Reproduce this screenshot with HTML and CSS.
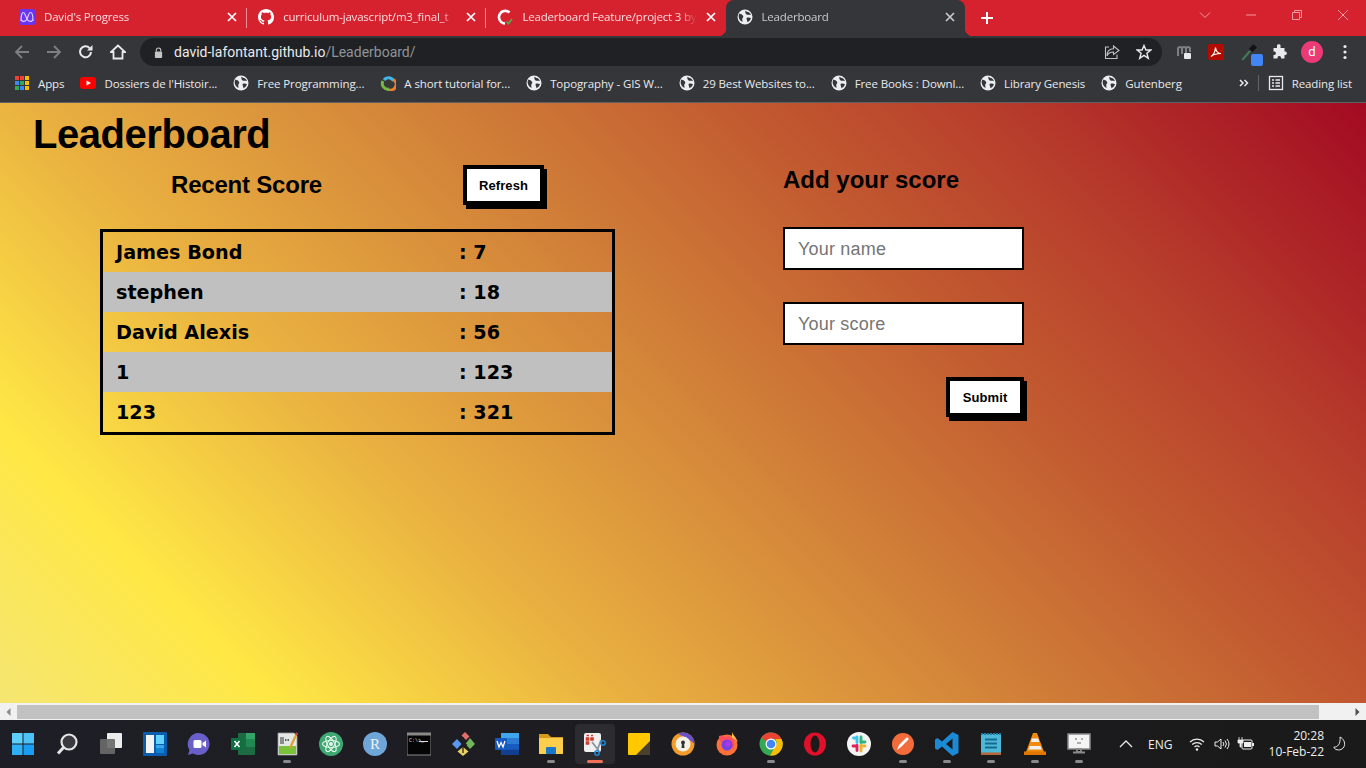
FILE: index.html
```html
<!DOCTYPE html>
<html lang="en">
<head>
    <meta charset="UTF-8">
    <title>Leaderboard</title>
    <link rel="stylesheet" href="styles.css">
</head>
<body>

<svg class="sprite" xmlns="http://www.w3.org/2000/svg">
    <symbol id="globe" viewBox="0 0 16 16">
        <circle cx="8" cy="8" r="7.500" fill="#eceef0"/>
        <path d="M2.500 4.500C4 5 5 5.500 5.800 6.500 6.500 7.500 6.500 8.500 5.500 9 5 10 5.500 11.500 5.500 13 4 12.500 2 10.500 1.700 8 1.600 6.500 1.800 5.500 2.500 4.500ZM8.500 1.800C9.500 2.500 10.500 3 11.800 3.200 12.800 4 13.500 5 14 6 13 5.800 12 5.800 10.800 5.800 9.500 5.800 9 5 8.500 4 8.200 3.200 8.200 2.500 8.500 1.800ZM10.500 8.500C12 8.300 13.200 8.700 14 9.200 13.300 11 12 12.500 10.500 13.300 10.200 12 10 11 9.600 10.200 9.400 9.300 9.700 8.700 10.500 8.500Z" fill="#35363a"/>
    </symbol>
    <symbol id="close" viewBox="0 0 10 10">
        <path d="M1 1 9 9M9 1 1 9" stroke="currentColor" stroke-width="1.700" fill="none"/>
    </symbol>
</svg>

<div class="tabbar">
    <div class="tab">
        <svg class="favicon" viewBox="0 0 16 16"><rect width="16" height="16" rx="2" fill="#6a35f0"/><path d="M2 12C2 6 3 3.500 4.500 3.500S6 6 8 10C10 6 9.500 3.500 11.500 3.500S14 6 14 12M2.500 10.500C2.500 13 6.500 13 8 10 9.500 13 13.500 13 13.500 10.500" stroke="#d9ccff" stroke-width="1.200" fill="none"/></svg>
        <span class="tab-title">David's Progress</span>
        <svg class="tab-close" viewBox="0 0 10 10"><use href="#close"/></svg>
    </div>
    <div class="tab">
        <svg class="favicon" viewBox="0 0 16 16"><path fill="#fff" d="M8 0C3.580 0 0 3.580 0 8c0 3.540 2.290 6.530 5.470 7.590.4.070.55-.17.55-.38 0-.19-.01-.82-.01-1.490-2.010.370-2.530-.49-2.690-.94-.09-.23-.48-.94-.82-1.130-.28-.15-.68-.52-.01-.53.630-.01 1.080.58 1.230.82.720 1.210 1.870.870 2.330.660.070-.52.280-.87.510-1.070-1.780-.2-3.640-.89-3.640-3.950 0-.87.310-1.590.820-2.150-.08-.2-.36-1.020.08-2.120 0 0 .67-.21 2.200.820.640-.18 1.320-.27 2-.27s1.360.090 2 .27c1.530-1.040 2.200-.82 2.200-.82.440 1.100.16 1.920.08 2.120.510.560.820 1.270.820 2.150 0 3.070-1.870 3.750-3.650 3.950.290.250.540.730.540 1.480 0 1.070-.01 1.930-.01 2.200 0 .21.150.46.550.380A8.010 8.010 0 0 0 16 8c0-4.420-3.580-8-8-8Z"/></svg>
        <span class="tab-title">curriculum-javascript/m3_final_t</span>
        <svg class="tab-close" viewBox="0 0 10 10"><use href="#close"/></svg>
    </div>
    <div class="tab">
        <svg class="favicon" viewBox="0 0 16 16"><path d="M12.500 3.500A6.300 6.300 0 1 0 8 14.500" stroke="#fff" stroke-width="2.600" fill="none"/><path d="M9.500 12.500 11.500 14.500 15 10" stroke="#3fb950" stroke-width="1.500" fill="none"/></svg>
        <span class="tab-title">Leaderboard Feature/project 3 by</span>
        <svg class="tab-close" viewBox="0 0 10 10"><use href="#close"/></svg>
    </div>
    <div class="tab tab-active">
        <svg class="favicon"><use href="#globe"/></svg>
        <span class="tab-title">Leaderboard</span>
        <svg class="tab-close" viewBox="0 0 10 10"><use href="#close"/></svg>
    </div>
    <svg class="new-tab" viewBox="0 0 14 14"><path d="M7 1V13M1 7H13" stroke="#fff" stroke-width="2" fill="none"/></svg>
    <div class="window-controls">
        <svg viewBox="0 0 12 12"><path d="M1 3.500 6 8.500 11 3.500" fill="none" stroke="#ee9aa0"/></svg>
        <svg viewBox="0 0 12 12"><path d="M1 6H11" fill="none" stroke="#ee9aa0"/></svg>
        <svg viewBox="0 0 12 12"><path d="M1.500 3.500H8.500V10.500H1.500ZM3.500 3.500V1.500H10.500V8.500H8.500" fill="none" stroke="#ee9aa0"/></svg>
        <svg viewBox="0 0 12 12"><path d="M1 1 11 11M11 1 1 11" fill="none" stroke="#ee9aa0"/></svg>
    </div>
</div>

<div class="toolbar">
    <svg class="tool" viewBox="0 0 16 16"><path d="M15 8H2M8 2 2 8 8 14" fill="none" stroke="#7d7f83" stroke-width="1.800"/></svg>
    <svg class="tool" viewBox="0 0 16 16"><path d="M1 8H14M8 2 14 8 8 14" fill="none" stroke="#7d7f83" stroke-width="1.800"/></svg>
    <svg class="tool" viewBox="0 0 16 16"><path d="M13 8A5.500 5.500 0 1 1 11.500 4" fill="none" stroke="#e8eaed" stroke-width="2"/><path d="M14.500 1V6.500H9Z" fill="#e8eaed"/></svg>
    <svg class="tool" viewBox="0 0 16 16"><path d="M8 1.500 1 8H3.500V14.500H12.500V8H15Z" fill="none" stroke="#e8eaed" stroke-width="1.800"/></svg>
    <div class="omnibox">
        <svg class="lock" viewBox="0 0 10 12"><path d="M2.500 5V3.500A2.500 2.500 0 0 1 7.500 3.500V5" fill="none" stroke="#c4c7c5" stroke-width="1.200"/><rect x="1" y="5" width="8" height="7" rx="1" fill="#c4c7c5"/></svg>
        <span class="url">david-lafontant.github.io<span class="url-path">/Leaderboard/</span></span>
        <svg class="omni-icon" viewBox="0 0 16 16"><path d="M9.500 2 15 6.500 9.500 10.500V8C6 8 4 9.500 3 12 3 8 5 5 9.500 4.800ZM5 3H1.500V14.500H13V10.500" fill="none" stroke="#bdc1c6" stroke-width="1.100"/></svg>
        <svg class="omni-icon" viewBox="0 0 16 16"><path d="M8 1.500 9.900 6H14.800L10.900 9.200 12.300 14.300 8 11.400 3.700 14.300 5.100 9.200 1.200 6H6.100Z" fill="none" stroke="#e8eaed" stroke-width="1.400"/></svg>
    </div>
    <div class="extensions">
        <svg class="ext-wide" viewBox="0 0 16 16"><path d="M2 12V5A2 2 0 0 1 6 5V10M6 5A2 2 0 0 1 10 5V9M10 5A2 2 0 0 1 14 5V8" fill="none" stroke="#7d7f83" stroke-width="2"/><rect x="8" y="9" width="7" height="6" rx="1" fill="#e8eaed"/></svg>
        <svg class="ext-pdf" viewBox="0 0 16 16"><rect width="16" height="16" rx="2" fill="#b30b00"/><path d="M3 12.500C5 11.500 7 8 7.500 3.500 8 7.500 10 9.500 13 9.500 10 9.500 6 10 3 12.500Z" fill="none" stroke="#fff" stroke-width="1.200"/></svg>
        <span class="ext-dropper">
            <svg viewBox="0 0 16 16"><path d="M2 15 9 7" stroke="#3d7d5a" stroke-width="2"/><path d="M8 5 12 1 15 4 11 8Z" fill="#111"/></svg>
            <span class="ext-badge"></span>
        </span>
        <svg class="ext-puzzle" viewBox="0 0 16 16"><path fill="#e8eaed" d="M6 1.500A1.700 1.700 0 0 1 9.500 2.500V4H13.500V7.500H14.500A1.800 1.800 0 0 1 14.500 11H13.500V14.500H10V13.500A1.800 1.800 0 0 0 6.500 13.500V14.500H2.500V11H3.500A1.800 1.800 0 0 0 3.500 7.500H2.500V4H6Z"/></svg>
        <span class="avatar">d</span>
        <svg class="kebab" viewBox="0 0 4 16"><circle cx="2" cy="2.500" r="1.600"/><circle cx="2" cy="8" r="1.600"/><circle cx="2" cy="13.500" r="1.600"/></svg>
    </div>
</div>

<div class="bookmarks">
    <div class="bookmark">
        <svg class="favicon" viewBox="0 0 16 16">
            <rect x="1" y="1" width="4" height="4" fill="#ea4335"/><rect x="6" y="1" width="4" height="4" fill="#ea4335"/><rect x="11" y="1" width="4" height="4" fill="#fbbc04"/>
            <rect x="1" y="6" width="4" height="4" fill="#4285f4"/><rect x="6" y="6" width="4" height="4" fill="#34a853"/><rect x="11" y="6" width="4" height="4" fill="#fbbc04"/>
            <rect x="1" y="11" width="4" height="4" fill="#34a853"/><rect x="6" y="11" width="4" height="4" fill="#4285f4"/><rect x="11" y="11" width="4" height="4" fill="#fbbc04"/>
        </svg>
        <span>Apps</span>
    </div>
    <div class="bookmark">
        <svg class="favicon" viewBox="0 0 16 16"><rect y="2" width="16" height="12" rx="3" fill="#f00"/><path d="M6.500 5.500V10.500L11 8Z" fill="#fff"/></svg>
        <span>Dossiers de l'Histoir...</span>
    </div>
    <div class="bookmark"><svg class="favicon"><use href="#globe"/></svg><span>Free Programming...</span></div>
    <div class="bookmark">
        <svg class="favicon" viewBox="0 0 16 16"><path d="M4 5A5.500 5.500 0 0 1 13.500 6" fill="none" stroke="#41b6e6" stroke-width="3"/><path d="M13 4.500A5.500 5.500 0 0 1 8 14.500" fill="none" stroke="#ef7d31" stroke-width="3"/><path d="M9 14A5.500 5.500 0 0 1 3 6" fill="none" stroke="#74b843" stroke-width="3"/></svg>
        <span>A short tutorial for...</span>
    </div>
    <div class="bookmark"><svg class="favicon"><use href="#globe"/></svg><span>Topography - GIS W...</span></div>
    <div class="bookmark"><svg class="favicon"><use href="#globe"/></svg><span>29 Best Websites to...</span></div>
    <div class="bookmark"><svg class="favicon"><use href="#globe"/></svg><span>Free Books : Downl...</span></div>
    <div class="bookmark"><svg class="favicon"><use href="#globe"/></svg><span>Library Genesis</span></div>
    <div class="bookmark"><svg class="favicon"><use href="#globe"/></svg><span>Gutenberg</span></div>
    <div class="bookmarks-end">
        <svg class="more" viewBox="0 0 10 8"><path d="M1 1 4 4 1 7M5.500 1 8.500 4 5.500 7" fill="none" stroke="#e8eaed" stroke-width="1.500"/></svg>
        <span class="divider"></span>
        <svg class="favicon" viewBox="0 0 16 16"><rect x="1.500" y="1.500" width="13" height="13" fill="none" stroke="#e8eaed" stroke-width="1.300"/><path d="M4 5H6M7.500 5H12M4 8H6M7.500 8H12M4 11H6M7.500 11H12" stroke="#e8eaed" stroke-width="1.300"/></svg>
        <span>Reading list</span>
    </div>
</div>

<main class="page">
    <h1>Leaderboard</h1>
    <div class="board">
        <section class="scores">
            <div class="scores-head">
                <h2 class="recent-title">Recent Score</h2>
                <button class="btn">Refresh</button>
            </div>
            <table class="score-table">
                <tr><td>James Bond</td><td>: 7</td></tr>
                <tr><td>stephen</td><td>: 18</td></tr>
                <tr><td>David Alexis</td><td>: 56</td></tr>
                <tr><td>1</td><td>: 123</td></tr>
                <tr><td>123</td><td>: 321</td></tr>
            </table>
        </section>
        <form class="add-score">
            <h2>Add your score</h2>
            <input type="text" placeholder="Your name">
            <input type="text" placeholder="Your score">
            <button type="button" class="btn btn-submit">Submit</button>
        </form>
    </div>
</main>

<div class="scrollbar">
    <svg class="arrow" viewBox="0 0 6 8"><path d="M5 0V8L1 4Z" fill="#8a8a8a"/></svg>
    <div class="scroll-thumb"></div>
    <svg class="arrow" viewBox="0 0 6 8"><path d="M1 0V8L5 4Z" fill="#505050"/></svg>
</div>

<footer class="taskbar">
    <div class="task-apps">
        <div class="app"><svg viewBox="0 0 24 24"><rect x="1" y="1" width="10.500" height="10.500" fill="#5cd0fb"/><rect x="12.500" y="1" width="10.500" height="10.500" fill="#4cc2f8"/><rect x="1" y="12.500" width="10.500" height="10.500" fill="#2fb0f5"/><rect x="12.500" y="12.500" width="10.500" height="10.500" fill="#1a9df0"/></svg></div>
        <div class="app"><svg viewBox="0 0 24 24"><circle cx="14" cy="10" r="7.500" fill="#3a3a40" stroke="#e6e6e6" stroke-width="2.200"/><path d="M8.500 15.500 3 21.500" stroke="#e6e6e6" stroke-width="3"/></svg></div>
        <div class="app"><svg viewBox="0 0 24 24"><rect x="8" y="1" width="15" height="15" rx="1" fill="#ececec"/><rect x="1" y="7" width="15" height="15" rx="1" fill="#6a6a6a" fill-opacity=".92"/></svg></div>
        <div class="app"><svg viewBox="0 0 24 24"><rect width="24" height="24" rx="1" x="0" y="0" fill="#0b5cad"/><rect x="3" y="3" width="8" height="18" fill="#f2f2f2"/><rect x="13" y="3" width="8" height="9" fill="#63d3fb"/><rect x="13" y="13" width="8" height="3.500" fill="#2fa8ee"/><rect x="13" y="17" width="8" height="4" fill="#0e82d8"/></svg></div>
        <div class="app"><svg viewBox="0 0 24 24"><path d="M12 1A11 11 0 1 1 6 21.500L1 23 2.500 18A11 11 0 0 1 12 1Z" fill="#6a5fc9"/><rect x="6.500" y="8" width="8" height="8" rx="1.500" fill="#fff"/><path d="M15.500 11 19 8.500V15.500L15.500 13Z" fill="#fff"/></svg></div>
        <div class="app"><svg viewBox="0 0 24 24"><rect x="7" y="1" width="17" height="22" rx="1" fill="#1d6b42"/><rect x="15" y="1" width="9" height="6" fill="#33a36a"/><rect x="15" y="7" width="9" height="8" fill="#1f8a54"/><rect x="0" y="6" width="12" height="12" rx="1" fill="#107040"/><path d="M3.500 9 8.500 15M8.500 9 3.500 15" stroke="#fff" stroke-width="1.600"/></svg></div>
        <div class="app app-open"><svg viewBox="0 0 24 24"><path d="M3 1H19L22 4V23H3Z" fill="#e4e8e4" stroke="#9a9a9a" stroke-width=".8"/><path d="M4 14H21V22H4Z" fill="#79c23a"/><path d="M6 5V12M8 5V12" stroke="#333" stroke-width="1"/><path d="M10 8H14" stroke="#333" stroke-width="1.500" stroke-dasharray="1.500 1"/><path d="M22 1 15 16" stroke="#e0a030" stroke-width="2.200"/><path d="M22 1 21 3" stroke="#c23a3a" stroke-width="2.200"/></svg></div>
        <div class="app"><svg viewBox="0 0 24 24"><circle cx="12" cy="12" r="12" fill="#3ea873"/><circle cx="12" cy="12" r="2" fill="#e4f5ea"/><g fill="none" stroke="#e4f5ea" stroke-width="1.100"><ellipse cx="12" cy="12" rx="8.500" ry="3.500"/><ellipse cx="12" cy="12" rx="8.500" ry="3.500" transform="rotate(60 12 12)"/><ellipse cx="12" cy="12" rx="8.500" ry="3.500" transform="rotate(120 12 12)"/></g></svg></div>
        <div class="app"><svg viewBox="0 0 24 24"><circle cx="12" cy="12" r="12" fill="#6fa6d8"/><text x="12" y="17" text-anchor="middle" class="r-letter">R</text></svg></div>
        <div class="app"><svg viewBox="0 0 24 24"><rect x="0" y="1" width="24" height="22" fill="#050505" stroke="#8a8a8a"/><rect x="0" y="1" width="24" height="2.500" fill="#8a8a8a"/><text x="2" y="10" class="term-text">C:\&gt;_</text><path d="M12 9.500H21" stroke="#ddd"/></svg></div>
        <div class="app"><svg viewBox="0 0 24 24"><path d="M14 0 18.500 4.500 15 8 10.500 3.500Z" fill="#e26d6d"/><path d="M19 6 24 12 19 17 14.500 12Z" fill="#71b75c"/><path d="M6 7 10.500 12 6 17 1 12Z" fill="#5a97ef"/><path d="M12 15 17.500 19.500 12 24 6.500 19.500Z" fill="#ecd25f"/><path d="M12 5V21M12 11 16 13" stroke="#222" stroke-width="1.300"/></svg></div>
        <div class="app"><svg viewBox="0 0 24 24"><rect x="6" y="1" width="18" height="22" rx="1" fill="#2b7cd3"/><rect x="6" y="1" width="18" height="5" fill="#41a5ee"/><rect x="6" y="12" width="18" height="5.500" fill="#185abd"/><rect x="6" y="17.500" width="18" height="5.500" fill="#103f91"/><rect x="0" y="6" width="12" height="12" rx="1" fill="#1558c0"/><path d="M2 9 4 15 6 10.500 8 15 10 9" fill="none" stroke="#fff" stroke-width="1.300"/></svg></div>
        <div class="app app-open"><svg viewBox="0 0 24 24"><path d="M0 2H9L12 5H24V22H0Z" fill="#d69a1b"/><rect x="0" y="6" width="24" height="16" fill="#fbcf4c"/><rect x="7" y="15" width="10" height="7" rx="1" fill="#1878cc"/></svg></div>
        <div class="app app-active"><svg viewBox="0 0 24 24"><rect x="1" y="1" width="17" height="19" rx="2" fill="#f0f0f0"/><path d="M3.500 3.500H6M8 3.500H10M3.500 6H5.500V8H3.500ZM3.500 10H5.500V12H3.500ZM8 6H10V8H8Z" stroke="#d33b2c" stroke-width="1.600" fill="#d33b2c"/><path d="M9 10 16 19M18 8 14 19" stroke="#8a949c" stroke-width="1.800"/><circle cx="20" cy="11" r="2.200" fill="none" stroke="#1e88d8" stroke-width="1.500"/><circle cx="14" cy="21" r="2.200" fill="none" stroke="#1e88d8" stroke-width="1.500"/></svg></div>
        <div class="app"><svg viewBox="0 0 24 24"><rect x="1" y="1" width="22" height="22" rx="1" fill="#ffc800"/><path d="M9 23 23 9V23Z" fill="#4a4030"/></svg></div>
        <div class="app"><svg viewBox="0 0 24 24"><circle cx="12" cy="12" r="11.500" fill="#f39c2c"/><path d="M12 .5A11.500 11.500 0 0 1 23.500 12C20 8 14 5 7 2 9 1 10.500 .5 12 .5Z" fill="#6b4fc8"/><circle cx="12" cy="12" r="7.500" fill="#f4f1e6"/><circle cx="12" cy="10.500" r="2" fill="#333"/><path d="M11 11H13L13.500 16H10.500Z" fill="#333"/></svg></div>
        <div class="app"><svg viewBox="0 0 24 24"><circle cx="12" cy="13" r="10.500" fill="#ff7139"/><path d="M17 0C18 3 20 4 22 8 24 13 21 6 17 6Z" fill="#ffbd4f"/><path d="M4 6C3 3 7 3 9 5 12 3 17 5 17 6 20 9 20 14 18 17 16 15 14 13 12 13 9 13 5 11 4 6Z" fill="#ff4f5e"/><circle cx="12" cy="13" r="5.500" fill="#7542e5"/><circle cx="13" cy="12" r="2.500" fill="#b833e1"/></svg></div>
        <div class="app app-open"><svg viewBox="0 0 24 24"><circle cx="12" cy="12" r="11.500" fill="#34a853"/><path d="M12 .5A11.500 11.500 0 0 1 22.500 7H12A5 5 0 0 0 7.500 9.500L2.500 5.500A11.500 11.500 0 0 1 12 .5Z" fill="#ea4335"/><path d="M22.500 7A11.500 11.500 0 0 1 11 23.500L16.500 14A5 5 0 0 0 16 7Z" fill="#fbbc04"/><circle cx="12" cy="12" r="5.500" fill="#fff"/><circle cx="12" cy="12" r="4.300" fill="#4285f4"/></svg></div>
        <div class="app"><svg viewBox="0 0 24 24"><ellipse cx="12" cy="12" rx="11" ry="11.500" fill="#e0102a"/><ellipse cx="12" cy="12" rx="4.500" ry="8.500" fill="#1b1b1b"/></svg></div>
        <div class="app"><svg viewBox="0 0 24 24"><circle cx="12" cy="12" r="12" fill="#f4f4f4"/><g stroke-width="2.800" stroke-linecap="round"><path d="M10 5V10.500M10 6H6.500" stroke="#36c5f0" fill="none"/><path d="M14 5V10.500" stroke="#2eb67d"/><path d="M14 10H18" stroke="#2eb67d"/><path d="M14 13.500V19" stroke="#ecb22e"/><path d="M14 14H18" stroke="#ecb22e"/><path d="M10 13.500V18.500M6 14H10" stroke="#e01e5a"/></g></svg></div>
        <div class="app app-open"><svg viewBox="0 0 24 24"><circle cx="12" cy="12" r="11" fill="#f26b3a"/><path d="M6 18 8 13 15 6C16.500 4.500 18.500 6.500 17 8L10 15Z" fill="#fff"/></svg></div>
        <div class="app app-open"><svg viewBox="0 0 24 24"><path d="M17.500 0 23.500 3V21L17.500 24 7 14.500 2.500 18 0 16.500V7.500L2.500 6 7 9.500ZM17.500 6.500 11 12 17.500 17.500Z" fill="#1a8ad4"/></svg></div>
        <div class="app app-open"><svg viewBox="0 0 24 24"><rect x="2" y="2" width="20" height="21" rx="1" fill="#4fb8d8"/><rect x="2" y="20.500" width="20" height="2.500" fill="#b5673a"/><path d="M2 2H22" stroke="#1c7fa8" stroke-width="2" stroke-dasharray="2 1"/><path d="M6 7.500H18M6 11.500H18M6 15.500H18" stroke="#146a92" stroke-width="2"/></svg></div>
        <div class="app app-open"><svg viewBox="0 0 24 24"><path d="M10 1H14L21 20H3Z" fill="#f28a0c"/><path d="M8.800 6.500H15.200L16.200 10H7.800ZM6.500 14H17.500L18.700 17.500H5.300Z" fill="#f0f0f0"/><path d="M1 19.500H23V23H1Z" fill="#e07800"/></svg></div>
        <div class="app app-open"><svg viewBox="0 0 24 24"><rect x="1" y="2" width="22" height="15" fill="#f4f4f4" stroke="#8a8a8a" stroke-width="1.500"/><path d="M9 6V8M15 6V8M10 11H14" stroke="#666"/><path d="M10 17H14V20H10ZM6 20.500H18" stroke="#8a8a8a" stroke-width="1.800"/></svg></div>
    </div>
    <div class="tray">
        <svg class="tray-up" viewBox="0 0 14 8"><path d="M1 7 7 1 13 7" fill="none" stroke="#e6e6e6" stroke-width="1.300"/></svg>
        <span class="lang">ENG</span>
        <svg class="tray-wifi" viewBox="0 0 16 14"><path d="M1 5A10 10 0 0 1 15 5M3.200 7.500A7 7 0 0 1 12.800 7.500M5.500 10A3.800 3.800 0 0 1 10.500 10" fill="none" stroke="#eee" stroke-width="1.200"/><circle cx="8" cy="12.500" r="1.200" fill="#eee"/></svg>
        <svg class="tray-vol" viewBox="0 0 16 14"><path d="M1 5H3.500L7 2V12L3.500 9H1Z" fill="none" stroke="#eee"/><path d="M9 5A3 3 0 0 1 9 9M11 3.500A5.500 5.500 0 0 1 11 10.500M13 2A8 8 0 0 1 13 12" fill="none" stroke="#eee"/></svg>
        <svg class="tray-bat" viewBox="0 0 18 14"><rect x="5" y="3" width="10" height="9" rx="1" fill="none" stroke="#eee"/><rect x="7" y="5" width="7" height="5" fill="#eee"/><rect x="15" y="6" width="2" height="3" fill="#eee"/><path d="M2 0V3M5 0V3M1 3H6V6H4V10H3V6H1Z" fill="#eee" stroke="#eee" stroke-width=".8"/></svg>
        <div class="clock"><span>20:28</span><span>10-Feb-22</span></div>
        <svg class="tray-moon" viewBox="0 0 16 18"><path d="M8 1C12 3 14 7 13 11 12 15 7 17 3 15 1 14 1 12.500 1 12.500 5 13 9 9 8 1Z" fill="none" stroke="#eee" stroke-width="1.100"/></svg>
    </div>
</footer>

</body>
</html>
```

FILE: styles.css
```css
* {
    box-sizing: border-box;
}
html, body {
    margin: 0;
    height: 768px;
    overflow: hidden;
}
body {
    display: flex;
    flex-direction: column;
    font-family: "Open Sans", "Noto Sans", sans-serif;
    font-size: 11.5px;
    color: #e8eaed;
    background-color: #35363a;
}
.sprite {
    display: none;
}
.favicon {
    width: 16px;
    height: 16px;
    flex: none;
}

/* Tab strip */
.tabbar {
    height: 36px;
    flex: none;
    display: flex;
    align-items: stretch;
    padding-left: 8px;
    background-color: #d6222f;
}
.tab {
    position: relative;
    width: 239.2px;
    flex: none;
    display: flex;
    align-items: center;
    gap: 9px;
    padding: 0 10px 2px 11px;
    color: #f6dcde;
    letter-spacing: -0.2px;
}
/* short separator between the inactive tabs */
.tab:nth-child(-n+2)::after {
    content: "";
    position: absolute;
    right: 0;
    top: 8px;
    width: 1px;
    height: 20px;
    background-color: #eb8f96;
}
.tab-title {
    flex: 1;
    padding-bottom: 2px;
    white-space: nowrap;
    overflow: hidden;
    -webkit-mask-image: linear-gradient(90deg, #000 90%, transparent);
}
.tab-close {
    width: 10px;
    height: 10px;
    flex: none;
    color: #fff;
}
.tab-active {
    background-color: #35363a;
    border-radius: 8px 8px 0 0;
    color: #c8cacd;
}
.tab-active .tab-close {
    color: #c8cacd;
}
/* little flares at the foot of the active tab */
.tab-active::before, .tab-active::after {
    content: "";
    position: absolute;
    bottom: 0;
    width: 8px;
    height: 8px;
}
.tab-active::before {
    left: -8px;
    background-image: radial-gradient(circle at 0 0, transparent 8px, #35363a 8.5px);
}
.tab-active::after {
    right: -8px;
    background-image: radial-gradient(circle at 100% 0, transparent 8px, #35363a 8.5px);
}
.new-tab {
    width: 14px;
    height: 14px;
    align-self: center;
    margin-left: 15px;
}
.window-controls {
    margin-left: auto;
    display: flex;
    align-items: center;
    height: 30px;
}
.window-controls svg {
    width: 46px;
    height: 12px;
}

/* Address bar */
.toolbar {
    height: 32px;
    flex: none;
    display: flex;
    align-items: center;
    padding-left: 14px;
    background-color: #35363a;
}
.tool {
    width: 16px;
    height: 16px;
    margin-right: 16px;
    flex: none;
}
.omnibox {
    width: 1022px;
    height: 28px;
    margin-left: -2px;
    flex: none;
    display: flex;
    align-items: center;
    padding: 0 10px 0 14px;
    background-color: #202124;
    border-radius: 14px;
}
.lock {
    width: 9px;
    height: 11px;
    margin-right: 11px;
}
.url {
    flex: 1;
    font-family: "Roboto", sans-serif;
    font-size: 14px;
    color: #e8eaed;
}
.url-path {
    color: #8f9499;
}
.omni-icon {
    width: 16px;
    height: 16px;
    margin-left: 16px;
}
.extensions {
    flex: 1;
    display: flex;
    align-items: center;
    padding-left: 14px;
    height: 30px;
}
.ext-wide, .ext-pdf {
    width: 16px;
    height: 16px;
    margin-right: 16px;
}
.ext-dropper {
    position: relative;
    width: 18px;
    height: 18px;
    margin-right: 13px;
}
.ext-dropper svg {
    width: 18px;
    height: 18px;
    display: block;
}
.ext-badge {
    position: absolute;
    right: -5px;
    bottom: -5px;
    width: 12px;
    height: 12px;
    border-radius: 2px;
    background-color: #4285f4;
}
.ext-puzzle {
    width: 16px;
    height: 16px;
    margin-right: 14px;
}
.avatar {
    width: 22px;
    height: 22px;
    margin-right: 20px;
    flex: none;
    border-radius: 50%;
    background-color: #ec3a76;
    color: #fff;
    font-family: "Roboto", sans-serif;
    font-size: 13px;
    line-height: 21px;
    text-align: center;
}
.kebab {
    width: 4px;
    height: 16px;
    fill: #e8eaed;
}

/* Bookmarks */
.bookmarks {
    height: 35px;
    flex: none;
    display: flex;
    align-items: center;
    gap: 16px;
    padding: 0 14px 4px 14px;
    background-color: #35363a;
    border-bottom: 1px solid #5f6064;
    white-space: nowrap;
}
.bookmark {
    display: flex;
    align-items: center;
    gap: 8px;
    letter-spacing: -0.1px;
}
.bookmarks-end {
    margin-left: auto;
    display: flex;
    align-items: center;
    gap: 8px;
    letter-spacing: -0.1px;
}
.more {
    width: 10px;
    height: 8px;
}
.divider {
    width: 1px;
    height: 16px;
    margin: 0 1px;
    background-color: #5f6368;
}

/* The page itself */
.page {
    flex: 1;
    min-height: 0;
    padding: 8px 0 0 33px;
    color: #000;
    font-family: "Liberation Sans", Arial, sans-serif;
    background-image: linear-gradient(45deg, #f5e672 0%, #ffe845 14%, #e9b040 32%, #d07e38 53%, #c0552f 70%, #b83f2c 80%, #a30a22 100%);
}
h1 {
    margin: 0;
    font-size: 40px;
    line-height: 46px;
    letter-spacing: -0.45px;
}
h2 {
    margin: 0 0 1px;
    font-size: 24px;
    line-height: 28px;
}
.recent-title {
    letter-spacing: -0.2px;
}
.board {
    display: flex;
    align-items: flex-start;
}
.scores {
    width: 515px;
    margin: 8px 0 0 67px;
}
.scores-head {
    width: 444px;
    padding-left: 71px;
    display: flex;
    align-items: center;
    justify-content: space-between;
}
.btn {
    width: 81px;
    height: 40px;
    padding: 0;
    background-color: #fff;
    border: 4px solid #000;
    box-shadow: 3px 4px 0 #000;
    color: #000;
    font-family: "Liberation Sans", Arial, sans-serif;
    font-size: 13px;
    font-weight: bold;
    letter-spacing: 0.1px;
}
.score-table {
    width: 515px;
    margin-top: 24px;
    border: 3px solid #000;
    border-collapse: separate;
    border-spacing: 0;
    font-family: "DejaVu Sans", sans-serif;
    font-weight: bold;
    font-size: 19.2px;
}
.score-table tr:nth-child(even) {
    background-color: #c0c0c0;
}
.score-table td {
    height: 40px;
    padding: 0 0 0 13px;
}
.score-table td:first-child {
    width: 356px;
}
.score-table td:last-child {
    padding-left: 0;
}
.add-score {
    width: 241px;
    margin: 9px 0 0 168px;
    display: flex;
    flex-direction: column;
}
.add-score input {
    height: 43px;
    margin-top: 32px;
    padding: 2px 13px 0;
    border: 2px solid #000;
    border-radius: 0;
    background-color: #fff;
    font-family: "Liberation Sans", Arial, sans-serif;
    font-size: 18px;
    letter-spacing: 0.2px;
}
.add-score input::placeholder {
    color: #757575;
}
.btn-submit {
    width: 78px;
    margin-top: 32px;
    align-self: flex-end;
}

/* Horizontal scrollbar */
.scrollbar {
    height: 17px;
    flex: none;
    display: flex;
    align-items: center;
    background-color: #f1f1f1;
    justify-content: space-between;
}
.scroll-thumb {
    height: 14px;
    width: 1302px;
    margin-right: auto;
    background-color: #c1c1c1;
}
.arrow {
    width: 17px;
    height: 8px;
    flex: none;
}

/* Taskbar */
.taskbar {
    height: 48px;
    flex: none;
    display: flex;
    justify-content: space-between;
    background-image: linear-gradient(90deg, #1e1e26, #1c1c20 50%, #1a1a1a);
}
.task-apps {
    display: flex;
    padding-left: 1px;
}
.app {
    position: relative;
    width: 44px;
    height: 48px;
    flex: none;
    display: flex;
    align-items: center;
    justify-content: center;
}
.app svg {
    width: 24px;
    height: 24px;
    position: relative;
}
.app-open::after, .app-active::after {
    content: "";
    position: absolute;
    left: 18px;
    top: 40px;
    width: 8px;
    height: 3px;
    border-radius: 2px;
    background-color: #8a8a8a;
}
.app-active::before {
    content: "";
    position: absolute;
    left: 2px;
    top: 4px;
    width: 40px;
    height: 40px;
    border-radius: 4px;
    background-color: #2b2b30;
}
.app-active::after {
    left: 14px;
    width: 16px;
    background-color: #f0705a;
}
.r-letter {
    fill: #eef4fa;
    font-family: "Liberation Serif", serif;
    font-size: 15px;
}
.term-text {
    fill: #ddd;
    font-family: "Liberation Mono", monospace;
    font-size: 5px;
}
.tray {
    display: flex;
    align-items: center;
    color: #eee;
    padding-right: 19px;
}
.tray-up {
    width: 14px;
    height: 8px;
    margin-right: 15px;
}
.lang {
    font-size: 12px;
    margin-right: 16px;
}
.tray-wifi {
    width: 16px;
    height: 14px;
    margin-right: 9px;
}
.tray-vol {
    width: 16px;
    height: 14px;
    margin-right: 7px;
}
.tray-bat {
    width: 18px;
    height: 14px;
    margin-right: 14px;
}
.clock {
    display: flex;
    flex-direction: column;
    align-items: flex-end;
    line-height: 16px;
    font-size: 12px;
    margin-right: 9px;
}
.tray-moon {
    width: 14px;
    height: 16px;
}
```
